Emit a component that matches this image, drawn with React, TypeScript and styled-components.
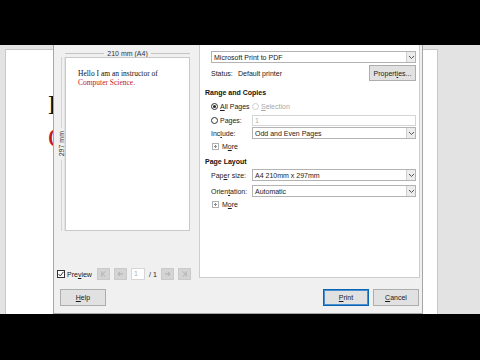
import { createGlobalStyle } from 'styled-components';
import styled from 'styled-components';

const GlobalStyle = createGlobalStyle`
  html, body {
    margin: 0;
    padding: 0;
    background: #000;
    width: 480px;
    height: 360px;
    overflow: hidden;
  }
`;

const Chevron = () => (
  <svg width="7" height="6" viewBox="0 0 7 6">
    <polyline points="1,2 3.5,4.5 6,2" fill="none" stroke="#555" strokeWidth="1" />
  </svg>
);

const PlusIcon = () => (
  <svg width="7" height="7" viewBox="0 0 7 7">
    <rect x="0.5" y="0.5" width="6" height="6" fill="#fff" stroke="#b0b0b0" strokeWidth="1" />
    <line x1="2" y1="3.5" x2="5" y2="3.5" stroke="#8a8a8a" strokeWidth="1" />
    <line x1="3.5" y1="2" x2="3.5" y2="5" stroke="#8a8a8a" strokeWidth="1" />
  </svg>
);

const NavIcon = ({ kind }: { kind: 'first' | 'prev' | 'next' | 'last' }) => {
  const flip = kind === 'next' || kind === 'last';
  return (
    <svg width="13" height="12" viewBox="0 0 13 12" style={flip ? { transform: 'scaleX(-1)' } : undefined}>
      {kind === 'first' || kind === 'last' ? (
        <>
          <line x1="4.5" y1="3" x2="4.5" y2="9" stroke="#a8a8a8" strokeWidth="1" />
          <polyline points="8.5,3 5.5,6 8.5,9" fill="none" stroke="#a8a8a8" strokeWidth="1" />
        </>
      ) : (
        <>
          <line x1="3.5" y1="6" x2="9.5" y2="6" stroke="#a8a8a8" strokeWidth="1" />
          <polyline points="6,3.5 3.5,6 6,8.5" fill="none" stroke="#a8a8a8" strokeWidth="1" />
        </>
      )}
    </svg>
  );
};

const Select = ({ value }: { value: string }) => (
  <S.SelectBox>
    <S.SelectValue>{value}</S.SelectValue>
    <S.SelectArrow>
      <Chevron />
    </S.SelectArrow>
  </S.SelectBox>
);

const More = () => (
  <S.MoreRow>
    <PlusIcon />
    <span>
      M<u>o</u>re
    </span>
  </S.MoreRow>
);

const App = () => {
  return (
    <>
      <GlobalStyle />
      <S.Frame>
        <S.Letterbox $h={45} />
        <S.Stage>
          <S.DocPage>
            <S.DocLine>Hello I am an instructor of</S.DocLine>
            <S.DocLine $red>Computer Science.</S.DocLine>
          </S.DocPage>

          <S.Dialog>
            <S.Body>
              <S.PreviewColumn>
                <S.PreviewGrid>
                  <span />
                  <S.DimTop>
                    <S.HLine />
                    <S.DimText>210 mm (A4)</S.DimText>
                    <S.HLine />
                  </S.DimTop>
                  <S.DimLeft>
                    <S.VLine />
                    <S.DimTextVertical>297 mm</S.DimTextVertical>
                    <S.VLine />
                  </S.DimLeft>
                  <S.PreviewPage>
                    <div>Hello I am an instructor of</div>
                    <S.RedText>Computer Science.</S.RedText>
                  </S.PreviewPage>
                </S.PreviewGrid>

                <S.NavRow>
                  <S.CheckLabel>
                    <S.CheckBox>
                      <svg width="6" height="6" viewBox="0 0 6 6">
                        <polyline points="0.5,3 2.3,5 5.5,0.8" fill="none" stroke="#222" strokeWidth="0.9" />
                      </svg>
                    </S.CheckBox>
                    <span>
                      Pre<u>v</u>iew
                    </span>
                  </S.CheckLabel>
                  <S.NavButton>
                    <NavIcon kind="first" />
                  </S.NavButton>
                  <S.NavButton>
                    <NavIcon kind="prev" />
                  </S.NavButton>
                  <S.PageInput>1</S.PageInput>
                  <S.PageCount>/ 1</S.PageCount>
                  <S.NavButton>
                    <NavIcon kind="next" />
                  </S.NavButton>
                  <S.NavButton>
                    <NavIcon kind="last" />
                  </S.NavButton>
                </S.NavRow>
              </S.PreviewColumn>

              <S.Panel>
                <S.Row $top={20}>
                  <Select value="Microsoft Print to PDF" />
                </S.Row>
                <S.Row $top={2} $h={16}>
                  <S.StatusLabel>Status:</S.StatusLabel>
                  <span>Default printer</span>
                  <S.SmallButton>
                    <span>
                      Propert<u>i</u>es...
                    </span>
                  </S.SmallButton>
                </S.Row>

                <S.Heading $top={7}>Range and Copies</S.Heading>
                <S.Row $top={2}>
                  <S.FieldLabel>
                    <S.Radio $checked />
                    <span>
                      <u>A</u>ll Pages
                    </span>
                  </S.FieldLabel>
                  <S.RadioText $disabled>
                    <S.Radio $disabled />
                    <span>
                      <u>S</u>election
                    </span>
                  </S.RadioText>
                </S.Row>
                <S.Row $top={2}>
                  <S.FieldLabel>
                    <S.Radio />
                    <span>
                      Pa<u>g</u>es:
                    </span>
                  </S.FieldLabel>
                  <S.TextInput>1</S.TextInput>
                </S.Row>
                <S.Row $top={1}>
                  <S.FieldLabel>
                    <span>
                      Inc<u>l</u>ude:
                    </span>
                  </S.FieldLabel>
                  <Select value="Odd and Even Pages" />
                </S.Row>
                <More />

                <S.Heading $top={6}>Page Layout</S.Heading>
                <S.Row $top={2}>
                  <S.FieldLabel>
                    <span>
                      Pap<u>e</u>r size:
                    </span>
                  </S.FieldLabel>
                  <Select value="A4 210mm x 297mm" />
                </S.Row>
                <S.Row $top={4}>
                  <S.FieldLabel>
                    <span>
                      Orien<u>t</u>ation:
                    </span>
                  </S.FieldLabel>
                  <Select value="Automatic" />
                </S.Row>
                <More />
              </S.Panel>
            </S.Body>

            <S.Footer>
              <S.DialogButton>
                <span>
                  <u>H</u>elp
                </span>
              </S.DialogButton>
              <S.DialogButton $primary>
                <span>
                  <u>P</u>rint
                </span>
              </S.DialogButton>
              <S.DialogButton>
                <span>
                  <u>C</u>ancel
                </span>
              </S.DialogButton>
            </S.Footer>
          </S.Dialog>
        </S.Stage>
        <S.Letterbox $h={46} />
      </S.Frame>
    </>
  );
};

export default App;

const S = {
  Frame: styled.div`
    width: 480px;
    height: 360px;
    display: flex;
    flex-direction: column;
    background: #000;
    overflow: hidden;
  `,
  Letterbox: styled.div<{ $h: number }>`
    flex: none;
    height: ${(p) => p.$h}px;
    background: #000;
  `,
  Stage: styled.div`
    position: relative;
    flex: none;
    height: 269px;
    box-sizing: border-box;
    padding: 4px 0 0 5px;
    background: #e3e3e3;
    overflow: hidden;
  `,
  DocPage: styled.div`
    width: 433px;
    height: 320px;
    box-sizing: border-box;
    padding: 39px 0 0 42px;
    background: #fff;
    border: 1px solid #c8c8c8;
    font-family: 'Liberation Serif', 'Times New Roman', serif;
    font-size: 27px;
    line-height: 33px;
    white-space: nowrap;
    overflow: hidden;
  `,
  DocLine: styled.div<{ $red?: boolean }>`
    color: ${(p) => (p.$red ? '#c0191e' : '#111')};
  `,
  Dialog: styled.div`
    position: absolute;
    left: 53px;
    top: -20px;
    bottom: 0;
    width: 370px;
    box-sizing: border-box;
    display: flex;
    flex-direction: column;
    background: #f0f0f0;
    border: 1px solid #a6a6a6;
    font-family: 'Liberation Sans', Arial, sans-serif;
    font-size: 7px;
    color: #1a1a1a;
  `,
  Body: styled.div`
    flex: 1;
    display: flex;
    min-height: 0;
  `,
  PreviewColumn: styled.div`
    width: 145px;
    flex: none;
    box-sizing: border-box;
    display: flex;
    flex-direction: column;
    padding: 24px 0 0 4px;
  `,
  PreviewGrid: styled.div`
    display: grid;
    grid-template-columns: 7px 125px;
    grid-template-rows: 7px 174px;
  `,
  DimTop: styled.div`
    display: flex;
    align-items: center;
  `,
  HLine: styled.div`
    flex: 1;
    height: 1px;
    background: #c4c4c4;
  `,
  DimText: styled.span`
    padding: 0 3px;
    line-height: 7px;
    color: #333;
  `,
  DimLeft: styled.div`
    display: flex;
    flex-direction: column;
    align-items: center;
  `,
  VLine: styled.div`
    flex: 1;
    width: 1px;
    background: #d4d4d4;
  `,
  DimTextVertical: styled.span`
    writing-mode: vertical-rl;
    transform: rotate(180deg);
    padding: 3px 0;
    line-height: 7px;
    color: #333;
  `,
  PreviewPage: styled.div`
    box-sizing: border-box;
    background: #fff;
    border: 1px solid #c9c9c9;
    box-shadow: -1px 0 0 #e2e2e2;
    padding: 11px 0 0 12px;
    font-family: 'Liberation Serif', 'Times New Roman', serif;
    font-size: 7.5px;
    line-height: 9px;
    color: #111;
    white-space: nowrap;
  `,
  RedText: styled.div`
    color: #c0191e;
  `,
  NavRow: styled.div`
    margin-top: auto;
    height: 12px;
    display: flex;
    align-items: center;
    gap: 4px;
  `,
  CheckLabel: styled.label`
    width: 36px;
    margin-left: -1px;
    display: flex;
    align-items: center;
    gap: 2px;
  `,
  CheckBox: styled.span`
    width: 8px;
    height: 8px;
    box-sizing: border-box;
    border: 1px solid #333;
    background: #fff;
    display: flex;
    align-items: center;
    justify-content: center;
  `,
  NavButton: styled.span`
    width: 13px;
    height: 12px;
    box-sizing: border-box;
    background: #d4d4d4;
    border: 1px solid #cacaca;
    display: flex;
    align-items: center;
    justify-content: center;
  `,
  PageInput: styled.span`
    width: 14px;
    height: 12px;
    box-sizing: border-box;
    background: #fff;
    border: 1px solid #d6d6d6;
    padding-left: 2px;
    line-height: 10px;
    color: #b0b0b0;
  `,
  PageCount: styled.span`
    width: 8px;
    white-space: nowrap;
  `,
  Panel: styled.div`
    width: 221px;
    flex: none;
    box-sizing: border-box;
    margin: 4px 2px 2px 0;
    padding: 0 3px 0 5px;
    background: #fff;
    border: 1px solid #cdcdcd;
    display: flex;
    flex-direction: column;
  `,
  Heading: styled.div<{ $top: number }>`
    margin-top: ${(p) => p.$top}px;
    height: 10px;
    line-height: 10px;
    font-weight: bold;
    color: #111;
  `,
  Row: styled.div<{ $top: number; $h?: number }>`
    margin-top: ${(p) => p.$top}px;
    height: ${(p) => p.$h ?? 12}px;
    padding-left: 6px;
    display: flex;
    align-items: center;
  `,
  StatusLabel: styled.span`
    width: 27px;
    flex: none;
  `,
  SmallButton: styled.span`
    margin-left: auto;
    width: 47px;
    height: 16px;
    box-sizing: border-box;
    background: #e1e1e1;
    border: 1px solid #adadad;
    display: flex;
    align-items: center;
    justify-content: center;
  `,
  FieldLabel: styled.span`
    width: 41px;
    flex: none;
    display: flex;
    align-items: center;
    gap: 2px;
    white-space: nowrap;
  `,
  RadioText: styled.span<{ $disabled?: boolean }>`
    display: flex;
    align-items: center;
    gap: 2px;
    color: ${(p) => (p.$disabled ? '#a8a8a8' : 'inherit')};
  `,
  Radio: styled.span<{ $checked?: boolean; $disabled?: boolean }>`
    position: relative;
    flex: none;
    width: 7px;
    height: 7px;
    box-sizing: border-box;
    border-radius: 50%;
    border: 1px solid ${(p) => (p.$disabled ? '#cfcfcf' : '#333')};
    background: #fff;
    &::after {
      content: '';
      display: ${(p) => (p.$checked ? 'block' : 'none')};
      position: absolute;
      left: 1px;
      top: 1px;
      width: 3px;
      height: 3px;
      border-radius: 50%;
      background: #222;
    }
  `,
  TextInput: styled.span`
    flex: 1;
    height: 11px;
    box-sizing: border-box;
    border: 1px solid #d4d4d4;
    padding-left: 2px;
    line-height: 9px;
    color: #b0b0b0;
  `,
  SelectBox: styled.span`
    flex: 1;
    height: 12px;
    box-sizing: border-box;
    background: #fff;
    border: 1px solid #b3b3b3;
    display: flex;
    align-items: center;
  `,
  SelectValue: styled.span`
    flex: 1;
    padding-left: 2px;
    white-space: nowrap;
  `,
  SelectArrow: styled.span`
    width: 9px;
    height: 10px;
    box-sizing: border-box;
    background: #ececec;
    border-left: 1px solid #cfcfcf;
    display: flex;
    align-items: center;
    justify-content: center;
  `,
  MoreRow: styled.div`
    margin-top: 2px;
    height: 10px;
    padding-left: 7px;
    display: flex;
    align-items: center;
    gap: 3px;
  `,
  Footer: styled.div`
    height: 33px;
    flex: none;
    box-sizing: border-box;
    padding: 9px 3px 0 6px;
    display: flex;
    align-items: flex-start;
    gap: 4px;
  `,
  DialogButton: styled.span<{ $primary?: boolean }>`
    width: 46px;
    height: 17px;
    box-sizing: border-box;
    background: #e1e1e1;
    border: 1px solid ${(p) => (p.$primary ? '#0a64b4' : '#adadad')};
    box-shadow: ${(p) => (p.$primary ? 'inset 0 0 0 1px #4a90d0' : 'none')};
    display: flex;
    align-items: center;
    justify-content: center;
    &:nth-child(2) {
      margin-left: auto;
    }
  `,
};
